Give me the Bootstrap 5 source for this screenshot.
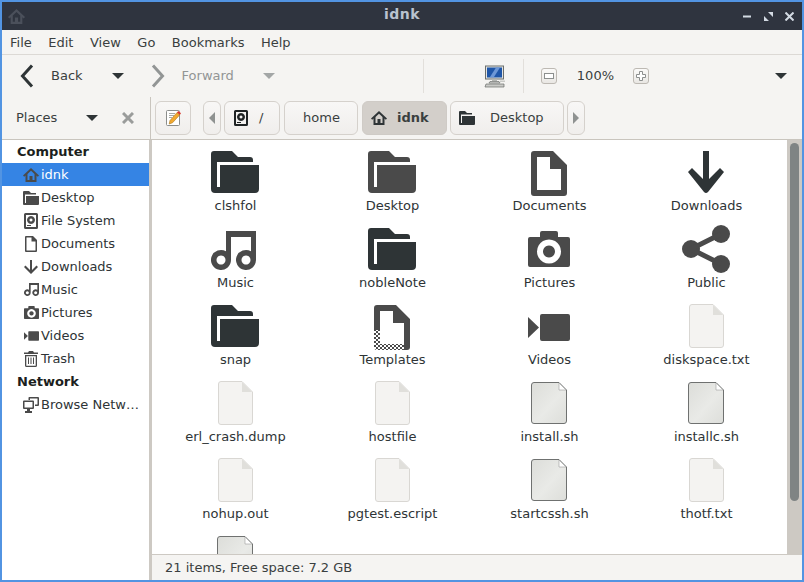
<!DOCTYPE html>
<html lang="en">
<head>
  <meta charset="UTF-8">
  <meta name="viewport" content="width=device-width, initial-scale=1">
  <title>idnk</title>

  <link href="https://cdn.jsdelivr.net/npm/bootstrap@5.3.0/dist/css/bootstrap.min.css" rel="stylesheet">

  <style>
    html, body { height: 100%; overflow: hidden; }
    body {
      font-family: "DejaVu Sans", sans-serif;
      font-size: 13px;
      line-height: 16px;
      color: #2e3436;
      background: #5294e2;
    }

    /* Window frame */
    .fm-window { width: 804px; height: 582px; border: 2px solid #5294e2; background: #f5f4f2; }

    /* Title bar */
    .fm-title { height: 28px; background: #2f343f; color: #bac3cf; font-weight: bold; padding: 0 8px 0 6px; }
    .fm-title-name { left: 0; right: 0; top: 4px; font-size: 14px; letter-spacing: .5px; }
    .fm-title-home { color: #4b505b; }
    .fm-controls { gap: 12px; }

    /* Menu bar */
    .fm-menu { height: 25px; border-bottom: 1px solid #dcd9d5; padding: 1px 8px 0; gap: 16.500px; color: #3a3f40; }

    /* Toolbar */
    .fm-tools { height: 42px; color: #3a3f40; }
    .fm-off { color: #929595; }
    .fm-sep { width: 1px; height: 34px; background: #e2dfdb; }
    .fm-zoom-btn { width: 16px; height: 16px; border: 1px solid #bdb9b3; border-radius: 3px; background: linear-gradient(#fbfaf9, #e9e7e4); }
    .fm-caret { width: 0; height: 0; border-left: 6px solid transparent; border-right: 6px solid transparent; border-top: 6px solid #2e3436; }
    .fm-caret.fm-off-caret { border-top-color: #a3a6a6; }
    .fm-back { margin-left: 18px; }
    .fm-back-txt { margin-left: 17px; }
    .fm-back-caret { margin-left: 29px; }
    .fm-fwd { margin-left: 27px; }
    .fm-fwd-txt { margin-left: 17px; }
    .fm-fwd-caret { margin-left: 29px; }
    .fm-sep-a { margin-left: 148px; }
    .fm-pc { margin-left: 60px; }
    .fm-sep-b { margin-left: 17px; }
    .fm-zoom-out { margin-left: 17px; }
    .fm-zoom-val { margin-left: 20px; }
    .fm-zoom-in { margin-left: 19px; }
    .fm-more { margin-right: 15px; }

    /* Places header and path bar */
    .fm-loc { height: 43px; border-bottom: 1px solid #c9c5be; }
    .fm-places-head { width: 148px; padding-left: 14px; color: #3a3f40; }
    .fm-places-caret { margin-left: 29px; }
    .fm-places-x { margin-left: 24px; }
    .fm-path { border-left: 1px solid #c9c5be; height: 42px; padding-left: 4px; }
    .fm-pbtn.btn {
      height: 34px; padding: 0; display: flex; align-items: center; justify-content: center;
      font-size: 13px; line-height: 16px; color: #3a3f40;
      border: 1px solid #d5d1cc; border-radius: 6px;
      background: linear-gradient(#f8f7f6, #f0eeec);
    }
    .fm-pbtn.fm-on { background: #d3cfca; border-color: #cfcbc6; font-weight: bold; }
    .fm-pbtn.fm-edit { width: 36px; }
    .fm-pbtn.fm-left { width: 18px; margin-left: 12px; }
    .fm-pbtn.fm-root { width: 56px; margin-left: 3px; gap: 11px; justify-content: flex-start; padding-left: 9px; }
    .fm-pbtn.fm-home { width: 74px; margin-left: 4px; padding-left: 1px; }
    .fm-pbtn.fm-idnk { width: 85px; margin-left: 4px; gap: 10px; justify-content: flex-start; padding-left: 8px; }
    .fm-pbtn.fm-desk { width: 114px; margin-left: 3px; gap: 15px; justify-content: flex-start; padding-left: 8px; }
    .fm-pbtn.fm-right { width: 18px; margin-left: 3px; }
    .fm-root svg { color: #1f2324; }
    .fm-idnk svg, .fm-desk svg { color: #2e3436; }
    .fm-arrow-l { width: 0; height: 0; border-top: 6px solid transparent; border-bottom: 6px solid transparent; border-right: 6px solid #8f9291; }
    .fm-arrow-r { width: 0; height: 0; border-top: 6px solid transparent; border-bottom: 6px solid transparent; border-left: 6px solid #8f9291; }

    /* Sidebar */
    .fm-body { flex: 1; min-height: 0; }
    .fm-side { width: 147px; flex: none; border-right: 3px solid #cdc9c3; box-sizing: content-box; background: #fff; color: #2e3436; }
    .fm-side-row { height: 23px; padding-left: 21px; gap: 2px; white-space: nowrap; overflow: hidden; }
    .fm-side-head { height: 23px; padding-left: 15px; font-weight: bold; color: #1c1f20; }
    .fm-side-row.fm-sel { background: #3584e4; color: #fff; }
    .fm-side-row svg { flex: none; color: #4a4a4a; }

    /* Icon view */
    .fm-right-pane { min-width: 0; }
    .fm-view-wrap { flex: 1; min-height: 0; }
    .fm-view { flex: 1; background: #fff; overflow: hidden; padding-left: 4.500px; }
    .fm-grid { display: grid; grid-template-columns: repeat(4, 157px); grid-auto-rows: 77px; padding-top: 8px; }
    .fm-item { display: flex; flex-direction: column; align-items: center; color: #2e3436; white-space: nowrap; }
    .fm-icon { height: 45px; display: flex; align-items: flex-end; justify-content: center; }
    .fm-label { margin-top: 5px; padding-left: 1px; line-height: 16px; }
    .fm-dark { color: #2e3436; }
    .fm-mid { color: #4a4a4a; }

    /* Scrollbar */
    .fm-scroll { width: 15px; background: #cdc9c3; padding: 3px 3px 0 3px; }
    .fm-thumb { width: 9px; height: 358px; background: #7f8484; border-radius: 5px; }

    /* Status bar */
    .fm-status { height: 26px; flex: none; padding-left: 13px; border-top: 1px solid #cdc9c3; color: #3a3f40; }
  </style>
</head>
<body>

  <svg width="0" height="0" class="position-absolute">
    <defs>
      <symbol id="i-folder" viewBox="0 0 48 42"><path fill="currentColor" d="M3 0H21L27 6H39a3 3 0 0 1 3 3V11H6V36H9V14H48V38a4 4 0 0 1-4 4H4a4 4 0 0 1-4-4V3a3 3 0 0 1 3-3Z"/></symbol>
      <symbol id="i-doc" viewBox="0 0 36 45"><path fill="currentColor" fill-rule="evenodd" d="M3 0H22L36 14V42a3 3 0 0 1-3 3H3a3 3 0 0 1-3-3V3a3 3 0 0 1 3-3ZM6 6V39H30V18H19V6Z"/></symbol>
      <symbol id="i-down" viewBox="0 0 36 42"><path fill="currentColor" d="M15 0H21V28L32 17 36 21 20 41a3 3 0 0 1-4 0L0 21 4 17 15 28Z"/></symbol>
      <symbol id="i-music" viewBox="0 0 45 39"><path fill="currentColor" fill-rule="evenodd" d="M15 0H45V29a10 10 0 1 1-5-8.7V6H20V29a10 10 0 1 1-5-8.7ZM10 24.5a4.500 4.500 0 1 0 .01 0ZM35 24.500a4.500 4.500 0 1 0 .01 0Z"/></symbol>
      <symbol id="i-camera" viewBox="0 0 42 36"><path fill="currentColor" fill-rule="evenodd" d="M14 0H28a2 2 0 0 1 2 2V6H40a2 2 0 0 1 2 2V34a2 2 0 0 1-2 2H2a2 2 0 0 1-2-2V8a2 2 0 0 1 2-2H12V2a2 2 0 0 1 2-2ZM21 8.500a12 12 0 1 0 .01 0ZM21 14.500a6 6 0 1 1-.01 0Z"/></symbol>
      <symbol id="i-share" viewBox="0 0 48 48"><g fill="currentColor"><circle cx="39" cy="9" r="9"/><circle cx="9" cy="24" r="9"/><circle cx="39" cy="39" r="9"/></g><path stroke="currentColor" stroke-width="5" fill="none" d="M39 9 9 24 39 39"/></symbol>
      <symbol id="i-video" viewBox="0 0 42 27"><path fill="currentColor" d="M0 3 11 13.500 0 24ZM14 0H40a2 2 0 0 1 2 2V25a2 2 0 0 1-2 2H14a2 2 0 0 1-2-2V2a2 2 0 0 1 2-2Z"/></symbol>
      <symbol id="i-template" viewBox="0 0 36 45">
        <defs><pattern id="p-check" width="4" height="4" patternUnits="userSpaceOnUse"><rect width="2" height="2" fill="#4a4a4a"/><rect x="2" y="2" width="2" height="2" fill="#4a4a4a"/></pattern></defs>
        <path fill="#4a4a4a" fill-rule="evenodd" d="M3 0H22L36 14V37H30V18H19V6H6V25H0V3a3 3 0 0 1 3-3Z"/>
        <path fill="#4a4a4a" d="M30 37H36V42a3 3 0 0 1-3 3H30Z"/>
        <path fill="url(#p-check)" d="M0 25H6V39H30V45H3a3 3 0 0 1-3-3Z"/>
      </symbol>
      <symbol id="i-text" viewBox="0 0 35 44"><path fill="#f4f3f1" stroke="#d9d7d3" d="M3 .5H24L34.500 11V41a2.500 2.500 0 0 1-2.500 2.500H3A2.500 2.500 0 0 1 .5 41V3A2.500 2.500 0 0 1 3 .5Z"/><path fill="#e0dfdb" d="M24 1 34 11H24Z"/></symbol>
      <linearGradient id="g-script" x1="0" y1="0" x2="1" y2="1"><stop offset="0" stop-color="#dcddd9"/><stop offset=".55" stop-color="#e9eae7"/><stop offset="1" stop-color="#dddeda"/></linearGradient>
      <symbol id="i-script" viewBox="0 0 36 42"><path fill="url(#g-script)" stroke="#6f7170" d="M3 .5H28L35.500 8V39a2.500 2.500 0 0 1-2.500 2.500H3A2.500 2.500 0 0 1 .5 39V3A2.500 2.500 0 0 1 3 .5Z"/><path fill="#fff" stroke="#9a9c9a" stroke-width=".6" d="M28 1V8H35Z"/></symbol>
      <symbol id="i-home" viewBox="0 0 16 16"><path fill="currentColor" fill-rule="evenodd" d="M8 1 16 8.500 14.800 9.800 13.500 8.600V15H2.500V8.600L1.200 9.800 0 8.500ZM4.500 7V13H6.500V9H9.500V13H11.500V7L8 3.700Z"/></symbol>
      <symbol id="i-sfolder" viewBox="0 0 16 16"><path fill="currentColor" d="M1 1H6L8 3H13V4.500H2V13H3V6H16V14a1 1 0 0 1-1 1H1a1 1 0 0 1-1-1V2a1 1 0 0 1 1-1Z"/></symbol>
      <symbol id="i-disk" viewBox="0 0 14 16"><path fill="currentColor" fill-rule="evenodd" d="M1.500 0H12.500A1.500 1.500 0 0 1 14 1.500V14.500A1.500 1.500 0 0 1 12.500 16H1.500A1.500 1.500 0 0 1 0 14.500V1.500A1.500 1.500 0 0 1 1.500 0ZM2 2V14H12V2ZM7 3A4 4 0 1 1 6.990 3ZM7 5.500A1.500 1.500 0 1 0 7.010 5.500ZM3 12H7V13H3Z"/></symbol>
      <symbol id="i-sdoc" viewBox="0 0 12 16"><path fill="currentColor" fill-rule="evenodd" d="M1 0H8L12 4V15a1 1 0 0 1-1 1H1a1 1 0 0 1-1-1V1a1 1 0 0 1 1-1ZM1.500 1.500V14.500H10.500V5.500H6.500V1.500Z"/></symbol>
      <symbol id="i-sdown" viewBox="0 0 14 14"><path fill="currentColor" d="M6 0H8V10L12.500 5.500 14 7 7 14 0 7 1.500 5.500 6 10Z"/></symbol>
      <symbol id="i-trash" viewBox="0 0 14 16"><path fill="currentColor" fill-rule="evenodd" d="M5 0H9L10 1.500H14V3H0V1.500H4ZM1 4H13V14.500A1.500 1.500 0 0 1 11.500 16H2.500A1.500 1.500 0 0 1 1 14.500ZM2.300 5.300V14.700H11.700V5.300ZM4 6.500H5V13H4ZM6.500 6.500H7.500V13H6.500ZM9 6.500H10V13H9Z"/></symbol>
      <symbol id="i-net" viewBox="0 0 16 16"><path fill="currentColor" fill-rule="evenodd" d="M6 0H15a1 1 0 0 1 1 1V8a1 1 0 0 1-1 1H12V7.500H14.500V1.500H7V3H5.500V1A1 1 0 0 1 6 0ZM1 3.500H10a1 1 0 0 1 1 1V11a1 1 0 0 1-1 1H7V14H9V16H2V14H4V12H1a1 1 0 0 1-1-1V4.500a1 1 0 0 1 1-1ZM1.500 5V10.500H9.500V5Z"/></symbol>
    </defs>
  </svg>

  <div class="fm-window d-flex flex-column">

    <!-- Title bar -->
    <div class="fm-title d-flex align-items-center justify-content-between position-relative">
      <svg class="fm-title-home" width="17" height="17"><use href="#i-home"/></svg>
      <div class="fm-title-name position-absolute text-center">idnk</div>
      <div class="fm-controls d-flex align-items-center">
        <svg width="9" height="9" viewBox="0 0 9 9"><path fill="#d3dae3" d="M0 3.500H8V5.500H0Z"/></svg>
        <svg width="9" height="9" viewBox="0 0 9 9"><path fill="#d3dae3" d="M4 0H9V5ZM0 4 5 9H0Z"/></svg>
        <svg width="9" height="9" viewBox="0 0 9 9"><path stroke="#d3dae3" stroke-width="2" d="M.5 .5 8.500 8.500M8.500 .5 .5 8.500"/></svg>
      </div>
    </div>

    <!-- Menu bar -->
    <div class="fm-menu d-flex align-items-center">
      <span>File</span><span>Edit</span><span>View</span><span>Go</span><span>Bookmarks</span><span>Help</span>
    </div>

    <!-- Toolbar -->
    <div class="fm-tools d-flex align-items-center">
      <svg class="fm-back" width="14" height="24" viewBox="0 0 14 24"><path fill="none" stroke="#2e3436" stroke-width="3" d="M12 1.500 2.500 12 12 22.500"/></svg>
      <span class="fm-back-txt">Back</span>
      <span class="fm-caret fm-back-caret"></span>
      <svg class="fm-fwd" width="14" height="24" viewBox="0 0 14 24"><path fill="none" stroke="#929595" stroke-width="3" d="M2 1.500 11.500 12 2 22.500"/></svg>
      <span class="fm-off fm-fwd-txt">Forward</span>
      <span class="fm-caret fm-off-caret fm-fwd-caret"></span>
      <span class="fm-sep fm-sep-a"></span>
      <svg class="fm-pc" width="22" height="23" viewBox="0 0 22 23">
        <rect x="1.500" y="1" width="18" height="13" fill="#e3e4e2" stroke="#6b6e6c"/>
        <rect x="3" y="2.500" width="15" height="10" fill="#1f56a8"/>
        <path fill="#6d97d6" d="M6 12 12 2.500H16L10 12Z"/>
        <path fill="#b4b6b3" d="M8 14H13V16H8Z"/>
        <path fill="#dcdcda" stroke="#6b6e6c" stroke-width=".7" d="M6 16.500H15L16 18H5Z"/>
        <path fill="#c9cac7" stroke="#6b6e6c" stroke-width=".7" d="M2 19H20V22H1Z"/>
        <path fill="#c9cac7" d="M16 15.500H21V17H16Z"/>
      </svg>
      <span class="fm-sep fm-sep-b"></span>
      <span class="fm-zoom-btn fm-zoom-out d-flex align-items-center justify-content-center"><svg width="10" height="6"><rect x=".5" y=".5" width="9" height="5" fill="#fff" stroke="#8c8f8e"/></svg></span>
      <span class="fm-zoom-val">100%</span>
      <span class="fm-zoom-btn fm-zoom-in d-flex align-items-center justify-content-center"><svg width="10" height="10" viewBox="0 0 10 10"><path fill="#fff" stroke="#8c8f8e" d="M3.500 .5H6.500V3.500H9.500V6.500H6.500V9.500H3.500V6.500H.5V3.500H3.500Z"/></svg></span>
      <span class="fm-caret fm-more ms-auto"></span>
    </div>

    <!-- Places header and path bar -->
    <div class="fm-loc d-flex align-items-center">
      <div class="fm-places-head d-flex align-items-center">
        <span>Places</span>
        <span class="fm-caret fm-places-caret"></span>
        <svg class="fm-places-x" width="12" height="12" viewBox="0 0 12 12"><path stroke="#9a9c9b" stroke-width="3" d="M1 1 11 11M11 1 1 11"/></svg>
      </div>
      <div class="fm-path d-flex align-items-center">
        <button class="fm-pbtn fm-edit btn" type="button">
          <svg width="18" height="18" viewBox="0 0 18 18">
            <rect x="2.500" y="1.500" width="13" height="15" rx="1" fill="#fff" stroke="#8b8d8b"/>
            <path stroke="#a5a7a5" d="M5 4.500H11M5 6.500H10M5 8.500H8"/>
            <path fill="#f2a92f" stroke="#a9761b" stroke-width=".6" d="M6 11.500 13 3.500 15.800 5.800 8.500 13.800 5.200 15Z"/>
            <path fill="#d9342b" d="M13 3.500 14.300 2 17 4.300 15.800 5.800Z"/>
          </svg>
        </button>
        <button class="fm-pbtn fm-left btn" type="button"><span class="fm-arrow-l"></span></button>
        <button class="fm-pbtn fm-root btn" type="button"><svg width="14" height="16"><use href="#i-disk"/></svg><span>/</span></button>
        <button class="fm-pbtn fm-home btn" type="button">home</button>
        <button class="fm-pbtn fm-on fm-idnk btn" type="button"><svg width="16" height="16"><use href="#i-home"/></svg><span>idnk</span></button>
        <button class="fm-pbtn fm-desk btn" type="button"><svg width="16" height="16"><use href="#i-sfolder"/></svg><span>Desktop</span></button>
        <button class="fm-pbtn fm-right btn" type="button"><span class="fm-arrow-r"></span></button>
      </div>
    </div>

    <div class="fm-body d-flex">
      <!-- Sidebar -->
      <div class="fm-side" id="side"></div>

      <div class="fm-right-pane d-flex flex-column flex-grow-1">
        <div class="fm-view-wrap d-flex">
          <!-- Icon view -->
          <div class="fm-view">
            <div class="fm-grid" id="grid"></div>
          </div>
          <div class="fm-scroll"><div class="fm-thumb"></div></div>
        </div>
        <div class="fm-status d-flex align-items-center">21 items, Free space: 7.2 GB</div>
      </div>
    </div>
  </div>

  <script src="https://cdn.jsdelivr.net/npm/bootstrap@5.3.0/dist/js/bootstrap.bundle.min.js"></script>

  <script>
    // sidebar rows: [label, symbol, w, h, selected]
    var side = [
      ["h", "Computer"],
      ["idnk", "i-home", 16, 16, 1],
      ["Desktop", "i-sfolder", 16, 16],
      ["File System", "i-disk", 14, 16],
      ["Documents", "i-sdoc", 12, 16],
      ["Downloads", "i-sdown", 14, 14],
      ["Music", "i-music", 15, 13],
      ["Pictures", "i-camera", 15, 13],
      ["Videos", "i-video", 15, 10],
      ["Trash", "i-trash", 14, 16],
      ["h", "Network"],
      ["Browse Netw\u2026", "i-net", 16, 16]
    ];
    var sideHtml = "";
    side.forEach(function (r) {
      if (r[0] === "h") {
        sideHtml += '<div class="fm-side-head d-flex align-items-center">' + r[1] + '</div>';
      } else {
        var pad = (16 - r[2]) / 2;
        sideHtml += '<div class="fm-side-row d-flex align-items-center' + (r[4] ? ' fm-sel' : '') + '">' +
          '<svg width="' + r[2] + '" height="' + r[3] + '" style="margin:0 ' + pad + 'px"><use href="#' + r[1] + '"/></svg><span>' + r[0] + '</span></div>';
      }
    });
    document.getElementById("side").innerHTML = sideHtml;

    // icon view items: [label, symbol, w, h, colour class, raise, shift]
    var items = [
      ["clshfol", "i-folder", 48, 42, "fm-dark", 0, 0],
      ["Desktop", "i-folder", 48, 42, "fm-mid", 0, 0],
      ["Documents", "i-doc", 36, 45, "fm-mid", -3, 0],
      ["Downloads", "i-down", 36, 42, "fm-dark", 0, 0],
      ["Music", "i-music", 45, 39, "fm-mid", 0, -3],
      ["nobleNote", "i-folder", 48, 42, "fm-dark", 0, 0],
      ["Pictures", "i-camera", 42, 36, "fm-mid", 3, 0],
      ["Public", "i-share", 48, 48, "fm-mid", -3, 0],
      ["snap", "i-folder", 48, 42, "fm-dark", 0, 0],
      ["Templates", "i-template", 36, 45, "fm-mid", -3, 0],
      ["Videos", "i-video", 42, 27, "fm-mid", 6, 0],
      ["diskspace.txt", "i-text", 35, 44, "", -1, 1],
      ["erl_crash.dump", "i-text", 35, 44, "", -1, 1],
      ["hostfile", "i-text", 35, 44, "", -1, 1],
      ["install.sh", "i-script", 36, 42, "", 0, 0],
      ["installc.sh", "i-script", 36, 42, "", 0, 0],
      ["nohup.out", "i-text", 35, 44, "", -1, 1],
      ["pgtest.escript", "i-text", 35, 44, "", -1, 1],
      ["startcssh.sh", "i-script", 36, 42, "", 0, 0],
      ["thotf.txt", "i-text", 35, 44, "", -1, 1],
      ["", "i-script", 36, 42, "", 0, 0]
    ];
    var gridHtml = "";
    items.forEach(function (it) {
      var shift = it[6] < 0 ? 'margin-right:' + (-it[6]) : 'margin-left:' + it[6];
      gridHtml += '<div class="fm-item"><div class="fm-icon ' + it[4] + '"><svg width="' + it[2] + '" height="' + it[3] +
        '" style="margin-bottom:' + it[5] + 'px;' + shift + 'px"><use href="#' + it[1] + '"/></svg></div>' +
        '<div class="fm-label">' + it[0] + '</div></div>';
    });
    document.getElementById("grid").innerHTML = gridHtml;
  </script>

</body>
</html>
